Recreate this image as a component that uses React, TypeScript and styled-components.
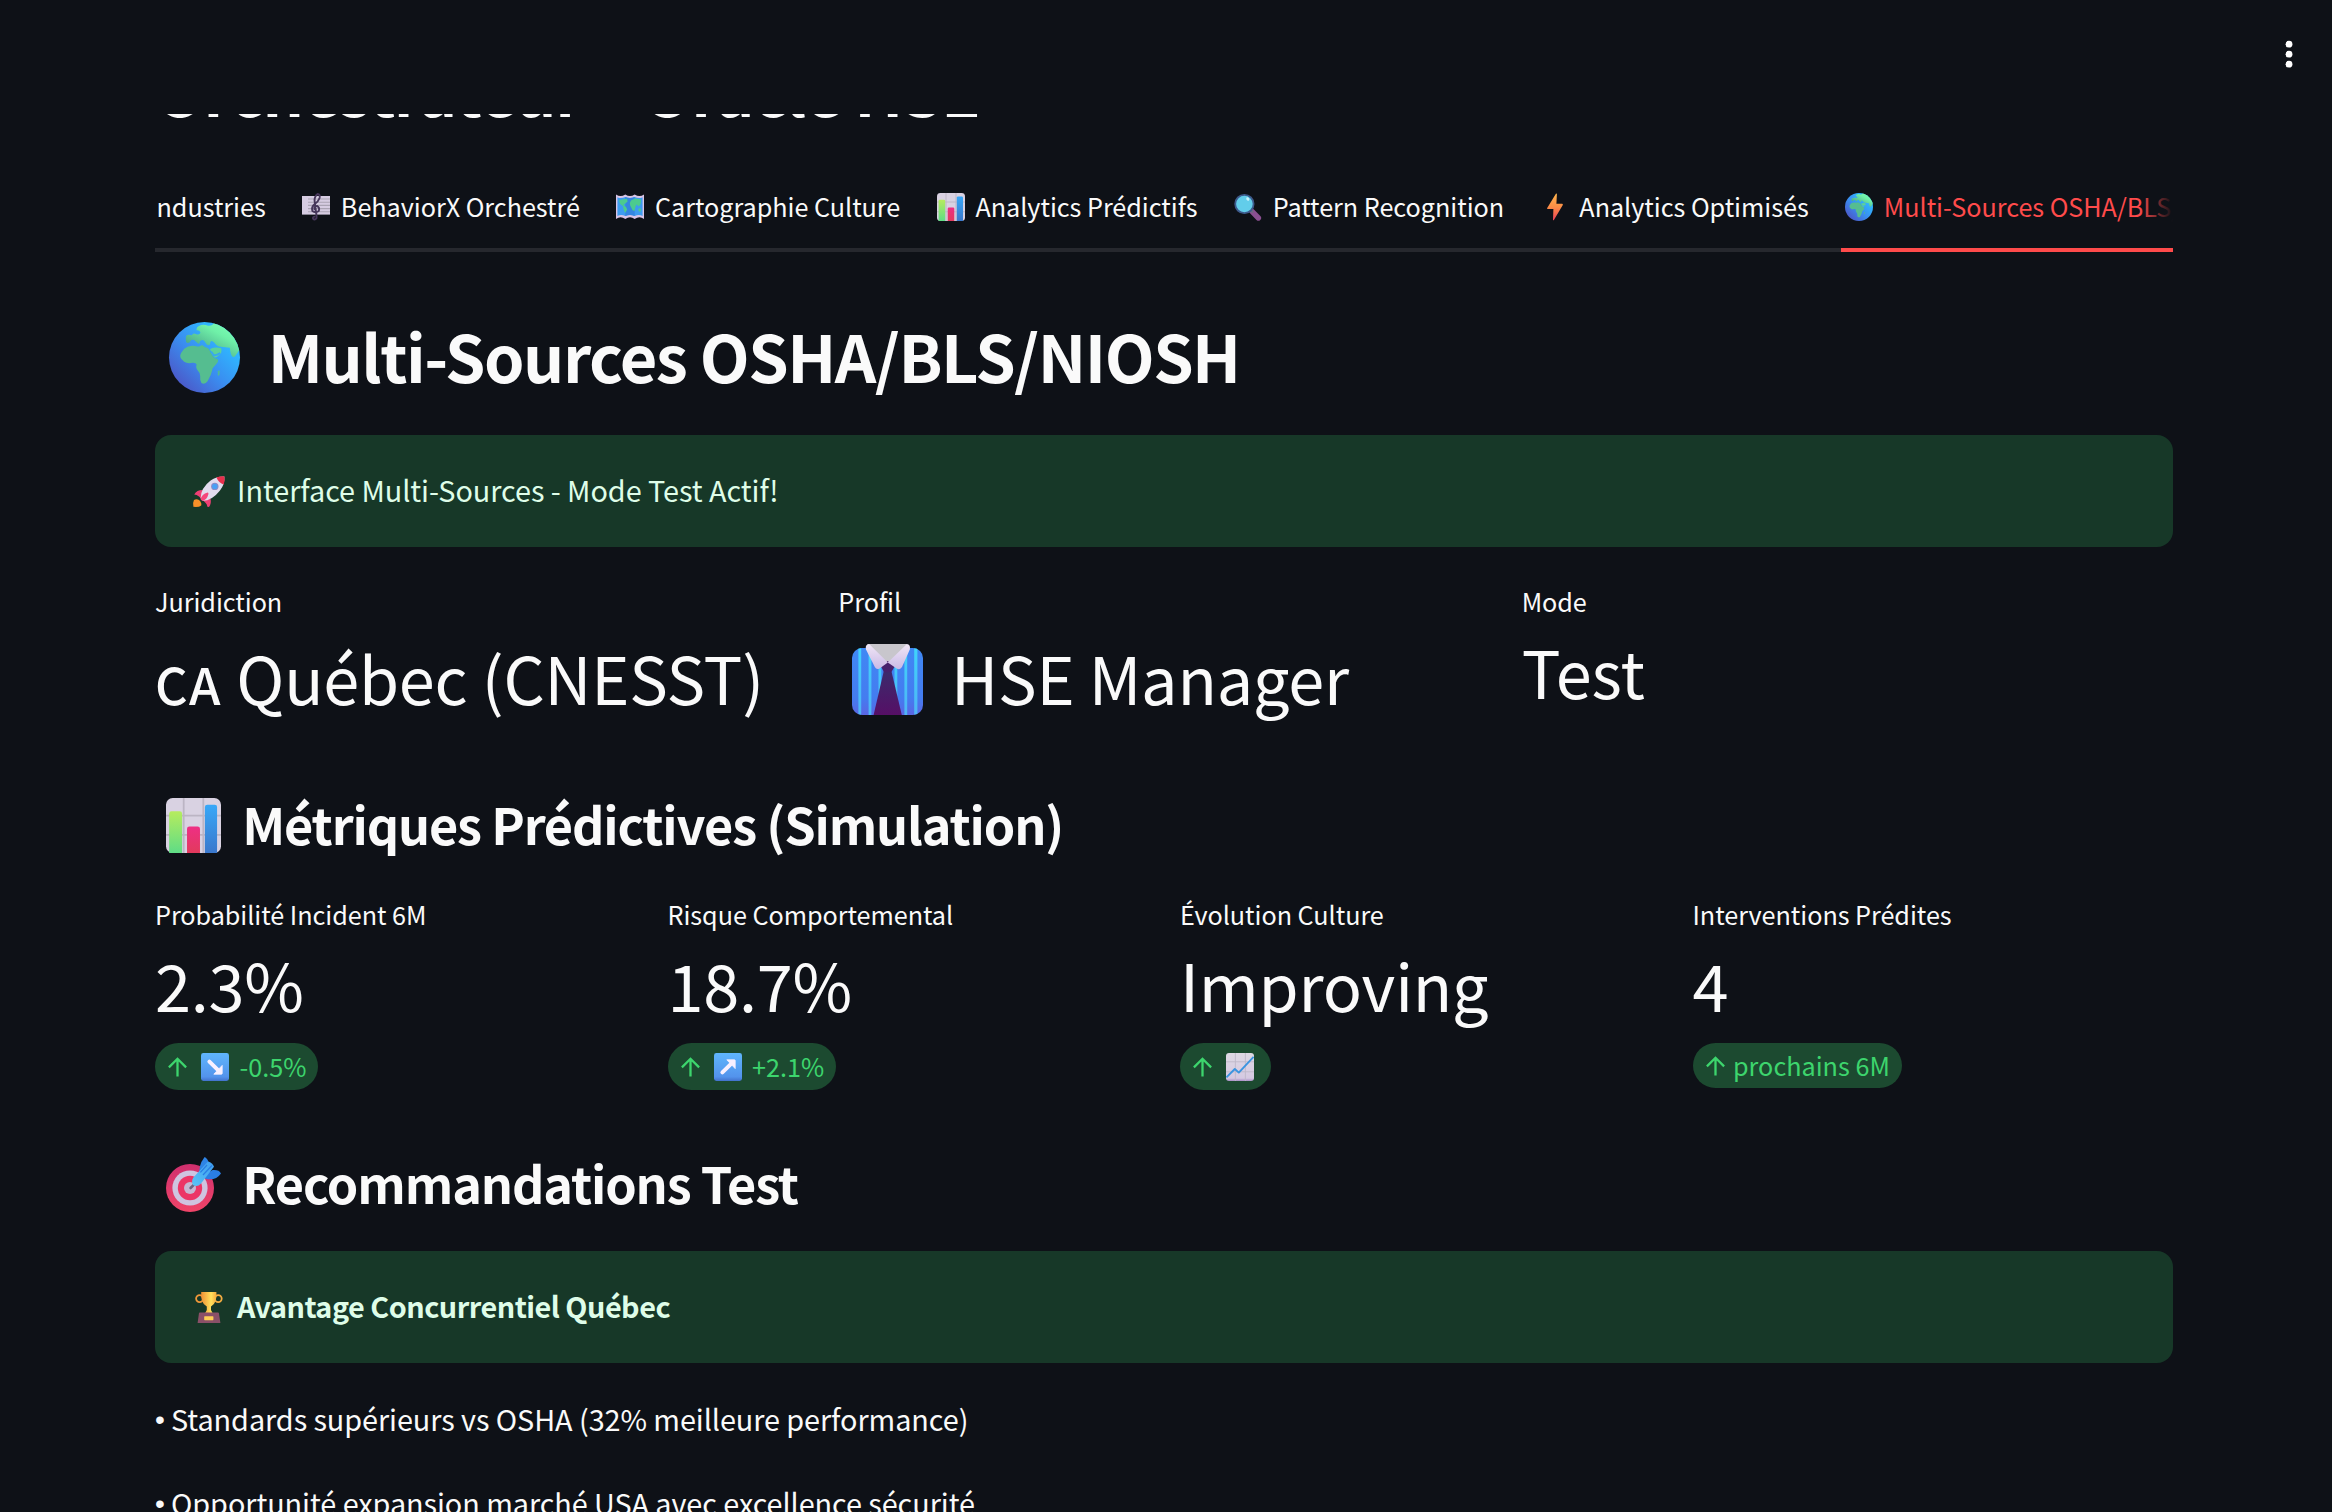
import React from "react";
import styled, { createGlobalStyle } from "styled-components";

const GlobalStyle = createGlobalStyle`
  *, *::before, *::after { box-sizing: border-box; }
  html, body { margin: 0; padding: 0; background: #0e1117; }
  body {
    overflow: hidden;
    font-family: "Noto Sans CJK SC", "Noto Sans", sans-serif;
    color: #fafafa;
  }
`;

/* ---------- layout ---------- */

const Page = styled.div`
  display: flex;
  flex-direction: column;
  width: 100%;
  height: 1512px;
  overflow: hidden;
  background: #0e1117;
`;

const TopBar = styled.header`
  flex: none;
  display: flex;
  justify-content: flex-end;
  align-items: flex-start;
  height: 114px;
  padding: 40px 39px 0 0;
`;

const Main = styled.main`
  flex: 1;
  min-height: 0;
  overflow: hidden;
  display: flex;
  flex-direction: column;
  padding: 0 159px 0 155px;
`;

const PageTitle = styled.h1`
  flex: none;
  margin: -68px 0 0;
  height: 86px;
  font-size: 64.8px;
  line-height: 86px;
  font-weight: 700;
  letter-spacing: -1.38px;
  white-space: pre;
`;

/* ---------- tabs ---------- */

const TabFrame = styled.nav`
  flex: none;
  position: relative;
  margin-top: 32px;
  height: 88px;
  overflow: hidden;
`;

const TabList = styled.div`
  display: flex;
  gap: 32px;
  height: 88px;
  padding-left: 1.5px;
  background: linear-gradient(#26282e, #26282e) 0 84px / 100% 4px no-repeat;
`;

const Tab = styled.div<{ $active?: boolean }>`
  flex: none;
  display: flex;
  align-items: center;
  height: 88px;
  font-size: 25.2px;
  line-height: 42px;
  letter-spacing: -0.03px;
  white-space: nowrap;
  color: ${(p) => (p.$active ? "#ff4b4b" : "#fafafa")};
  border-bottom: 4px solid ${(p) => (p.$active ? "#ff4b4b" : "transparent")};
`;

const TabFade = styled.div`
  position: absolute;
  top: 0;
  right: 0;
  width: 34px;
  height: 84px;
  background: linear-gradient(to right, rgba(14, 17, 23, 0), #0e1117);
`;

/* ---------- text blocks ---------- */

const IconCell = styled.span<{ $w: number; $left: number; $down?: number }>`
  flex: none;
  display: flex;
  width: ${(p) => p.$w}px;
  padding-left: ${(p) => p.$left}px;
  padding-top: ${(p) => p.$down ?? 0}px;
  svg { display: block; flex: none; overflow: visible; }
`;

const H2 = styled.h2`
  flex: none;
  display: flex;
  align-items: center;
  height: 86px;
  margin: 60px 0 37px;
  font-size: 64.8px;
  line-height: 86px;
  font-weight: 700;
  letter-spacing: -1.46px;
  white-space: nowrap;
`;

const H3 = styled.h3<{ $top: number; $bottom: number }>`
  flex: none;
  display: flex;
  align-items: center;
  height: 68px;
  margin: ${(p) => p.$top}px 0 ${(p) => p.$bottom}px;
  font-size: 50.4px;
  line-height: 68px;
  font-weight: 700;
  letter-spacing: -1.14px;
  white-space: nowrap;
`;

const Alert = styled.div<{ $strong?: boolean }>`
  flex: none;
  display: flex;
  align-items: center;
  height: 112px;
  padding: 0 32px;
  border-radius: 16px;
  background: #173828;
  color: #dffde9;
  font-size: 28.8px;
  line-height: 48px;
  font-weight: ${(p) => (p.$strong ? 700 : 400)};
  letter-spacing: ${(p) => (p.$strong ? "-0.5px" : "-0.05px")};
`;

const AlertText = styled.span`
  padding-bottom: 2px;
`;

const Bullet = styled.p<{ $top: number }>`
  flex: none;
  display: flex;
  margin: ${(p) => p.$top}px 0 0;
  font-size: 28.8px;
  line-height: 48px;
  letter-spacing: -0.06px;
  white-space: nowrap;
`;

const Dot = styled.span`
  width: 16px;
  padding-top: 1px;
  font-family: "Liberation Sans", sans-serif;
  font-size: 28px;
  line-height: 47px;
`;

/* ---------- metrics ---------- */

const MetricRow = styled.section<{ $cols: number; $top: number; $height: number }>`
  flex: none;
  display: grid;
  grid-template-columns: repeat(${(p) => p.$cols}, 1fr);
  column-gap: 32px;
  margin-top: ${(p) => p.$top}px;
  height: ${(p) => p.$height}px;
`;

const Metric = styled.div`
  display: flex;
  flex-direction: column;
  align-items: flex-start;
  min-width: 0;
`;

const Label = styled.div`
  font-size: 25.2px;
  line-height: 42px;
  letter-spacing: -0.04px;
  white-space: nowrap;
`;

const Value = styled.div<{ $top?: number }>`
  display: flex;
  align-items: center;
  height: 86px;
  margin-top: ${(p) => p.$top ?? 6}px;
  font-size: 64.8px;
  line-height: 86px;
  white-space: pre;
`;

const Region = styled.span`
  font-size: 50.6px;
  line-height: 0;
  font-weight: 500;
  letter-spacing: 1.4px;
`;

const ValueText = styled.span`
  letter-spacing: -0.2px;
`;

const Pill = styled.div<{ $h: number; $right: number }>`
  display: flex;
  align-items: center;
  height: ${(p) => p.$h}px;
  margin-top: 16px;
  padding: 0 ${(p) => p.$right}px 0 13px;
  border-radius: 24px;
  background: #1c4a30;
  color: #3dd56d;
  font-size: 25.2px;
  line-height: 42px;
  white-space: nowrap;
  svg { display: block; flex: none; }
`;

const PillText = styled.span<{ $left: number }>`
  padding: 0 0 1px ${(p) => p.$left}px;
`;

const PillIcon = styled.span`
  padding: 1px 0 0 14px;
`;

/* ---------- drawings ---------- */

type IconProps = { size?: number };

const MenuDots = () => (
  <svg width="8" height="30" viewBox="0 0 8 30" fill="#fff">
    <circle cx="4" cy="4.2" r="3.4" />
    <circle cx="4" cy="14.2" r="3.4" />
    <circle cx="4" cy="24.2" r="3.4" />
  </svg>
);

const ArrowUp = () => (
  <svg width="19" height="20" viewBox="0 0 19 20" fill="none" stroke="#3dd56d" strokeWidth="2.3">
    <path d="M9.5 19.6V2.2M.9 10.4 9.5 1.8l8.6 8.6" />
  </svg>
);

const Globe = ({ size = 28 }: IconProps) => (
  <svg width={size} height={size} viewBox="0 0 28 28">
    <defs>
      <linearGradient id="sea" x1="0.8" y1="0.3" x2="0.2" y2="0.9">
        <stop offset="0" stopColor="#2fb6ff" />
        <stop offset="0.5" stopColor="#3a8df0" />
        <stop offset="1" stopColor="#4a5ccb" />
      </linearGradient>
      <linearGradient id="land" x1="0.9" y1="0.1" x2="0.3" y2="0.8">
        <stop offset="0" stopColor="#7dffb8" />
        <stop offset="0.4" stopColor="#6ff0a8" />
        <stop offset="1" stopColor="#4fae8c" />
      </linearGradient>
      <clipPath id="disc"><circle cx="14" cy="14" r="14" /></clipPath>
    </defs>
    <circle cx="14" cy="14" r="14" fill="url(#sea)" />
    <g clipPath="url(#disc)">
      <path fill="#55bd90" d="M10.4 9.5Q12 10 12.6 9.3Q13.4 8.8 13.9 9.8L15 10.2Q15.9 10.5 16.2 11.6L17 13Q17.6 14.4 19.1 14.6Q19.7 15.2 19 16.2L17.2 18.2Q16.9 19.6 16.4 21L15.2 23.4Q14.2 24.8 12.8 24.1Q12.1 23 12.3 21.4Q12.4 20 11.4 19.2Q10.4 18.2 10.9 16.8Q10.6 16 9.3 16.1Q7.3 16.6 6 15.7L4.8 14.5Q4 13.3 4.9 12L6 10.5Q8 9 10.4 9.5Z" />
      <path fill="url(#land)" d="M17.8 0Q17.2 1.7 15.4 1.5Q13.4.7 11.8 1.6Q10.6 2.1 10.9 3.3Q12.2 3.2 12.4 4.2Q12 5.3 10.6 4.7Q9.4 4.3 9 5.2Q6.6 4.6 6.6 6.4L6.7 7.8Q7.3 8.7 8.2 8Q8.6 6.8 9.9 7.1L11.2 8.3Q12 9.2 12.2 7.6Q13.6 6.4 14.4 8.2Q15.2 9.7 16.2 8.8Q16.3 6.6 17.9 8.2Q19 9.8 20.4 9.8L24 10.2Q24.2 12.6 24.8 13.4Q25.6 14.4 26.4 13L28.4 10V0Z" />
      <path fill="#5cd29a" d="M16.2 10.6Q18.4 9.6 20.6 10.4Q21 12.2 20 12.8Q18.7 14.2 17.9 13.9Q16.6 12.6 16.2 10.6Z" />
      <path fill="#4fb79a" d="M19.3 19.4Q19.9 18.7 20 19.4V20.6Q19.6 21.6 19.2 20.9Z" />
    </g>
    <path d="M16.6 11.6Q17.4 12.8 17.9 13.2Q19 13 20.2 12.2" fill="none" stroke="#38a8ee" strokeWidth="0.7" />
  </svg>
);

const Score = () => (
  <svg width="28" height="28" viewBox="0 0 28 28">
    <rect x="0" y="3" width="28" height="18.6" fill="#d6cce2" />
    <path d="M6 6H28M6 9.2H28M6 12.4H28M6 15.6H28M6 18.8H28" stroke="#aaa3b4" strokeWidth="1.1" />
    <path
      d="M12.4 23.6Q10.6 24 11 25.6Q12.6 27.4 14.4 25.4Q14.8 24 14.3 21L12.6 8Q12.2 3.6 15.6 1Q18.4 1 17.6 5Q16.4 8.4 12.8 11Q9 14.2 10.4 18Q13.4 20.4 16.8 18Q18 14.6 15 12.9Q12.2 13.2 12.4 16.2"
      fill="none" stroke="#46365a" strokeWidth="1.9" strokeLinecap="round" />
  </svg>
);

const MapIcon = () => (
  <svg width="28" height="28" viewBox="0 0 28 28">
    <path d="M0 1.6Q4.5 4.6 9.3 1.6Q14 4.6 18.7 1.6Q23.5 4.6 28 1.6V26Q23.5 22.6 18.7 26Q14 22.6 9.3 26Q4.5 22.6 0 26Z" fill="#d8c4e6" />
    <path d="M1.4 4.2Q5 6 9.3 4Q14 6 18.7 4Q23 6 26.6 4.2V23Q23 20.8 18.7 23Q14 20.8 9.3 23Q5 20.8 1.4 23Z" fill="#3d9cf0" />
    <path d="M9.3 4Q14 6 18.7 4V23Q14 20.8 9.3 23Z" fill="#3486e0" />
    <path d="M3 7.4L6 6.4L11 5.8L11.6 8.4L9 10.8L7.4 12L10 14L11.2 16.4L9.2 20L7.6 16.4L7 13.2L4.2 11ZM15 7.6L19 5.4L25 6.4L24.6 11L22.8 13.6L20.6 11.6L19.4 13.8L18.6 18L16.6 17.2L14.2 12.6L13.8 10ZM22.4 15.6L25 15.4L24.6 18.8L22.6 18.2Z" fill="#4ccb8e" />
  </svg>
);

const BarChart = ({ size = 28 }: IconProps) => (
  <svg width={size} height={size} viewBox="0 0 28 28">
    <defs>
      <linearGradient id="bg1" x1="0" y1="0" x2="0" y2="1"><stop offset="0" stopColor="#b6ec5e" /><stop offset="1" stopColor="#5fdc86" /></linearGradient>
      <linearGradient id="bg2" x1="0" y1="0" x2="0" y2="1"><stop offset="0" stopColor="#ee2f85" /><stop offset="1" stopColor="#e23a5c" /></linearGradient>
      <linearGradient id="bg3" x1="0" y1="0" x2="0" y2="1"><stop offset="0" stopColor="#38a8f8" /><stop offset="1" stopColor="#3b78cc" /></linearGradient>
    </defs>
    <rect width="28" height="28" rx="3.4" fill="#d9d2e2" />
    <path d="M9 0V28M19 0V28M0 9H28M0 18.8H28" stroke="#bcb5c4" strokeWidth="0.9" />
    <path d="M1.6 28V8Q1.6 6.8 2.8 6.8H7Q8.2 6.8 8.2 8V28Z" fill="url(#bg1)" />
    <path d="M10.7 28V15.7Q10.7 14.5 11.9 14.5H16.1Q17.3 14.5 17.3 15.7V28Z" fill="url(#bg2)" />
    <path d="M19.8 28V4.6Q19.8 3.4 21 3.4H24.8Q26 3.4 26 4.6V28Z" fill="url(#bg3)" />
  </svg>
);

const Magnifier = () => (
  <svg width="28" height="28" viewBox="0 0 28 28">
    <path d="M18 18.4L24.4 25" stroke="#8a4f90" strokeWidth="5.4" strokeLinecap="round" />
    <path d="M16.4 16.8L19 19.4" stroke="#6d6a80" strokeWidth="2.6" />
    <circle cx="10.4" cy="11" r="9.2" fill="#62cdea" stroke="#3d5a8c" strokeWidth="1.8" />
    <ellipse cx="13.8" cy="6" rx="1.4" ry="1.9" fill="#c9f1fb" transform="rotate(-30 13.8 6)" />
  </svg>
);

const Bolt = () => (
  <svg width="28" height="28" viewBox="0 0 28 28">
    <defs>
      <linearGradient id="bolt" x1="0" y1="0" x2="0" y2="1"><stop offset="0" stopColor="#ffb54d" /><stop offset="0.5" stopColor="#fb8d46" /><stop offset="1" stopColor="#ec4058" /></linearGradient>
    </defs>
    <path d="M14.9.8Q15.9.2 15.9 1.3L15.4 10.8H21.2Q22.2 11 21.8 11.9L12.9 26.9Q11.9 28 12 26.5L12.4 16H6.7Q5.7 15.8 6.2 14.9Z" fill="url(#bolt)" />
  </svg>
);

const Rocket = () => (
  <svg width="32" height="31" viewBox="0 0 32 31">
    <path d="M1 24Q3.4 22.4 6 24Q9 26.6 8.2 29.4Q6 31.4 .4 30.8Q-.6 27 1 24Z" fill="#f79029" />
    <path d="M1.2 18.4Q4 13.6 10.6 14L15 20L17.6 23Q18.6 27.6 16 31L14.4 30.8Q14 27.6 12.2 26.4L6 20.4Q3.6 18.6 1.2 18.4Z" fill="#ef3f74" />
    <path d="M7.6 22.4Q7.6 12 17.6 4.4Q23.6.4 31.4.6Q32 8.6 27 14.4Q19 24.6 9.8 24.8Z" fill="#e2dbee" />
    <path d="M23.4 1.6Q27.4.1 31.4.4Q32.2 4.6 30.6 8.4Q26 7.4 23.4 1.6Z" fill="#e92f4c" />
    <path d="M7.6 23.6Q8.6 18 14.6 16.6Q15.8 16.8 15.4 18.2Q14 23.6 9.4 25Z" fill="#f5457c" />
    <circle cx="21.8" cy="10.4" r="3.7" fill="#8c8cc8" />
    <circle cx="21.8" cy="10.4" r="2.7" fill="#4aa0f4" />
  </svg>
);

const ShirtTie = () => (
  <svg width="71" height="71" viewBox="0 0 71 71">
    <defs>
      <linearGradient id="shirt" x1="0" y1="0" x2="0" y2="1"><stop offset="0" stopColor="#4088f4" /><stop offset="0.75" stopColor="#447cf0" /><stop offset="1" stopColor="#5a66e4" /></linearGradient>
      <linearGradient id="stripe" x1="0" y1="0" x2="0" y2="1"><stop offset="0" stopColor="#3fd4fb" /><stop offset="1" stopColor="#4fb4f6" /></linearGradient>
      <linearGradient id="tie" x1="0" y1="0" x2="0" y2="1"><stop offset="0" stopColor="#3b2b6c" /><stop offset="1" stopColor="#560f66" /></linearGradient>
      <linearGradient id="collar" x1="0" y1="0" x2="0" y2="1"><stop offset="0" stopColor="#f1e6f6" /><stop offset="1" stopColor="#c9bae6" /></linearGradient>
      <clipPath id="shirtClip"><rect y="4" width="71" height="67" rx="10" /></clipPath>
    </defs>
    <g clipPath="url(#shirtClip)">
      <rect y="4" width="71" height="67" fill="url(#shirt)" />
      <rect x="6.4" y="4" width="2.8" height="67" fill="url(#stripe)" />
      <rect x="16.6" y="4" width="2.8" height="67" fill="url(#stripe)" />
      <rect x="26.5" y="4" width="2.8" height="67" fill="url(#stripe)" />
      <rect x="42.5" y="4" width="2.8" height="67" fill="url(#stripe)" />
      <rect x="52.4" y="4" width="2.8" height="67" fill="url(#stripe)" />
      <rect x="62.2" y="4" width="3.2" height="67" fill="url(#stripe)" />
    </g>
    <path d="M31.8 27H39.4L49.8 71H21.6Z" fill="url(#tie)" />
    <path d="M15 0H56L36 20Z" fill="#c8c6cc" />
    <path d="M35.6 17L28.8 22L32 28.2H39.2L43 22Z" fill="#46216c" />
    <path d="M17.6.6L35.8 18.6L27.6 24.4Q24.6 26.2 22.8 23L14 5.4Q13 1 16 .2Z" fill="url(#collar)" />
    <path d="M54.4.6L35.8 18.6L44.6 24.4Q48 26.4 50 23L57.8 5.4Q58.6 1 56 .2Z" fill="url(#collar)" />
  </svg>
);

const ArrowTile = ({ up }: { up?: boolean }) => (
  <svg width="28" height="28" viewBox="0 0 28 28">
    <defs>
      <linearGradient id="tile" x1="0" y1="0" x2="0" y2="1"><stop offset="0" stopColor="#5fb6fd" /><stop offset="0.85" stopColor="#5393ec" /><stop offset="1" stopColor="#4272cc" /></linearGradient>
    </defs>
    <rect width="28" height="28" rx="2.4" fill="url(#tile)" />
    <g transform={up ? "translate(0 28) scale(1 -1)" : undefined}>
      <path d="M8.4 8.6L17.6 17.6" stroke="#f8f0ff" strokeWidth="4" strokeLinecap="round" />
      <path d="M21.2 12.4V20.4Q21.2 21.2 20.4 21.2H12.8Z" fill="#f8f0ff" stroke="#f8f0ff" strokeWidth="0.8" strokeLinejoin="round" />
    </g>
  </svg>
);

const ChartUp = () => (
  <svg width="28" height="28" viewBox="0 0 28 28">
    <defs>
      <linearGradient id="sheet" x1="0" y1="0" x2="0" y2="1"><stop offset="0" stopColor="#ded9e4" /><stop offset="0.9" stopColor="#d5c9e2" /><stop offset="1" stopColor="#a98fc6" /></linearGradient>
    </defs>
    <rect width="28" height="28" rx="3" fill="url(#sheet)" />
    <path d="M9.4 0V28M19.4 0V28M0 8.8H28M0 18.8H28" stroke="#c0b8c8" strokeWidth="0.9" />
    <path d="M.4 24.4L8.8 16L12.8 19.6L27.6 3.8" fill="none" stroke="#3a94e0" strokeWidth="1.9" strokeLinejoin="round" />
  </svg>
);

const Target = () => (
  <svg width="55" height="55" viewBox="0 0 55 55">
    <defs>
      <linearGradient id="rim" x1="0" y1="0" x2="0" y2="1"><stop offset="0" stopColor="#cf2f6e" /><stop offset="1" stopColor="#f04468" /></linearGradient>
      <linearGradient id="dart" x1="0" y1="1" x2="1" y2="0"><stop offset="0" stopColor="#58c4f6" /><stop offset="1" stopColor="#3f9df0" /></linearGradient>
    </defs>
    <circle cx="24" cy="31" r="24" fill="url(#rim)" />
    <circle cx="24" cy="31" r="17.6" fill="#cfc4e0" />
    <circle cx="24" cy="31" r="12.2" fill="#ec3566" />
    <circle cx="24" cy="31" r="6" fill="#c7b7d2" />
    <path d="M24.6 31L30 25.6" stroke="#6d6480" strokeWidth="2.6" strokeLinecap="round" />
    <path d="M38.6 0Q41.8 1.4 43.2 7L42 15L34 19Q31.6 9 38.6 0Z" fill="#2e84e6" />
    <path d="M55 16.4Q53 12.4 46.6 13L38 18L39 21.4Q49 24.6 55 16.4Z" fill="#2a7ee4" />
    <path d="M27 28Q25 24 27.4 20.4L42 4.4Q46.6 5.6 48 9.8L35 26.4Q31.4 30.4 27 28Z" fill="url(#dart)" />
    <path d="M37 18L46 8.4M34.4 15.4L41 8" stroke="#2a7ee4" strokeWidth="1.3" />
  </svg>
);

const Trophy = () => (
  <svg width="32" height="31" viewBox="0 0 32 31">
    <defs>
      <linearGradient id="cup" x1="0" y1="0" x2="1" y2="0"><stop offset="0" stopColor="#ee8f34" /><stop offset="0.65" stopColor="#ffe05c" /><stop offset="1" stopColor="#f4a83c" /></linearGradient>
    </defs>
    <circle cx="6.6" cy="6.6" r="3.5" fill="none" stroke="#f0983a" strokeWidth="1.8" />
    <circle cx="25.2" cy="6.6" r="3.5" fill="none" stroke="#f5ad42" strokeWidth="1.8" />
    <path d="M8.2 0H23.4Q24.4 11 18 14.6Q17.2 18 19.6 21H12.2Q14.6 18 13.8 14.6Q7.2 11 8.2 0Z" fill="url(#cup)" />
    <path d="M6 21Q6 20.4 6.8 20.4H25Q25.8 20.4 25.9 21L27.4 31H4.6Z" fill="#8a5068" />
    <rect x="11.2" y="24.2" width="9.2" height="4" rx="0.6" fill="#ffcf55" />
  </svg>
);

/* ---------- data ---------- */

const tabs: { icon?: React.ReactNode; text: string; active?: boolean }[] = [
  { text: "ndustries" },
  { icon: <Score />, text: "BehaviorX Orchestré" },
  { icon: <MapIcon />, text: "Cartographie Culture" },
  { icon: <BarChart />, text: "Analytics Prédictifs" },
  { icon: <Magnifier />, text: "Pattern Recognition" },
  { icon: <Bolt />, text: "Analytics Optimisés" },
  { icon: <Globe />, text: "Multi-Sources OSHA/BLS/NIOSH", active: true },
];

const predictions: { label: string; value: string; icon?: React.ReactNode; delta?: string }[] = [
  { label: "Probabilité Incident 6M", value: "2.3%", icon: <ArrowTile />, delta: "-0.5%" },
  { label: "Risque Comportemental", value: "18.7%", icon: <ArrowTile up />, delta: "+2.1%" },
  { label: "Évolution Culture", value: "Improving", icon: <ChartUp /> },
  { label: "Interventions Prédites", value: "4", delta: "prochains 6M" },
];

export default function App() {
  return (
    <>
      <GlobalStyle />
      <Page>
        <TopBar>
          <MenuDots />
        </TopBar>
        <Main>
          <PageTitle>Orchestrateur – Oracle HSE</PageTitle>

          <TabFrame>
            <TabList>
              {tabs.map((t) => (
                <Tab key={t.text} $active={t.active}>
                  {t.icon && <IconCell $w={43.2} $left={4.5} $down={2}>{t.icon}</IconCell>}
                  {t.text}
                </Tab>
              ))}
            </TabList>
            <TabFade />
          </TabFrame>

          <H2>
            <IconCell $w={112.7} $left={14} $down={5}><Globe size={71} /></IconCell>
            Multi-Sources OSHA/BLS/NIOSH
          </H2>

          <Alert>
            <IconCell $w={50} $left={6}><Rocket /></IconCell>
            <AlertText>Interface Multi-Sources - Mode Test Actif!</AlertText>
          </Alert>

          <MetricRow $cols={3} $top={33} $height={140}>
            <Metric>
              <Label>Juridiction</Label>
              <Value $top={12}>
                <ValueText><Region>CA</Region> Québec (CNESST)</ValueText>
              </Value>
            </Metric>
            <Metric>
              <Label>Profil</Label>
              <Value $top={12}>
                <IconCell $w={112.7} $left={14} $down={5}><ShirtTie /></IconCell>
                <ValueText>HSE Manager</ValueText>
              </Value>
            </Metric>
            <Metric>
              <Label>Mode</Label>
              <Value>Test</Value>
            </Metric>
          </MetricRow>

          <H3 $top={70} $bottom={0}>
            <IconCell $w={87.2} $left={11} $down={2}><BarChart size={55} /></IconCell>
            Métriques Prédictives (Simulation)
          </H3>

          <MetricRow $cols={4} $top={35} $height={197}>
            {predictions.map((m) => (
              <Metric key={m.label}>
                <Label>{m.label}</Label>
                <Value><ValueText>{m.value}</ValueText></Value>
                <Pill $h={m.icon ? 47 : 45} $right={m.delta ? 12 : 17}>
                  <ArrowUp />
                  {m.icon && <PillIcon>{m.icon}</PillIcon>}
                  {m.delta && <PillText $left={m.icon ? 10.5 : 8.5}>{m.delta}</PillText>}
                </Pill>
              </Metric>
            ))}
          </MetricRow>

          <H3 $top={59} $bottom={34}>
            <IconCell $w={87.2} $left={11} $down={3}><Target /></IconCell>
            Recommandations Test
          </H3>

          <Alert $strong>
            <IconCell $w={50} $left={6}><Trophy /></IconCell>
            <AlertText>Avantage Concurrentiel Québec</AlertText>
          </Alert>

          <Bullet $top={32}>
            <Dot>•</Dot>Standards supérieurs vs OSHA (32% meilleure performance)
          </Bullet>
          <Bullet $top={36}>
            <Dot>•</Dot>Opportunité expansion marché USA avec excellence sécurité
          </Bullet>
        </Main>
      </Page>
    </>
  );
}
